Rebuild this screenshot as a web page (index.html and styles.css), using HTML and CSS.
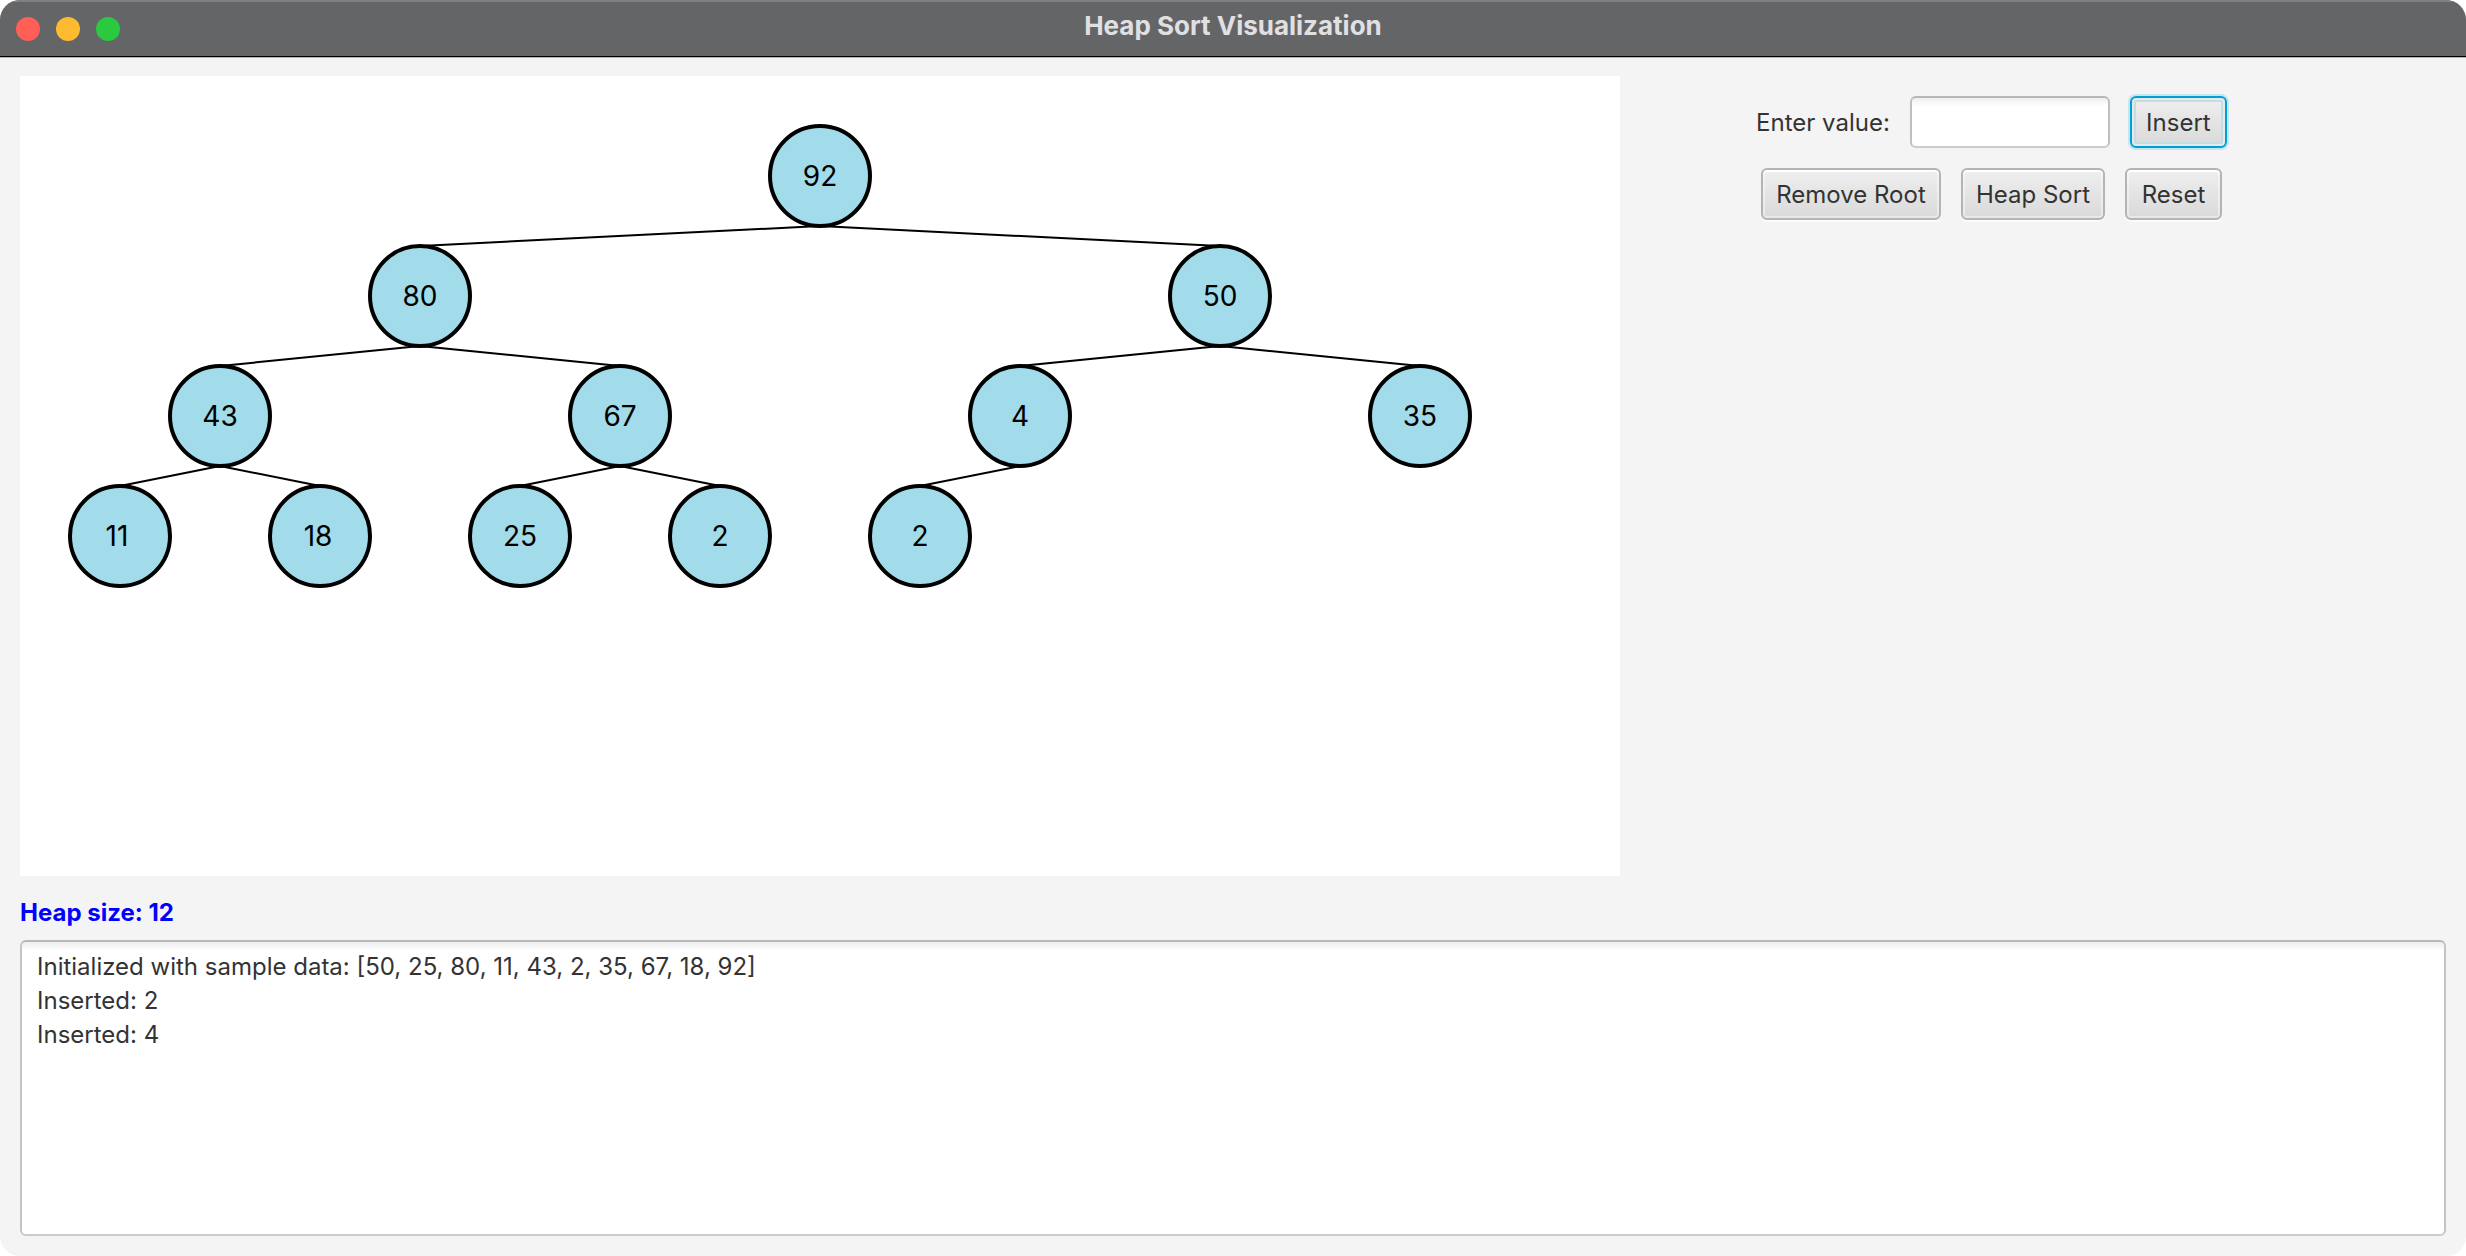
FILE: index.html
```html
<!DOCTYPE html>
<html lang="en">
<head>
<meta charset="utf-8">
<title>Heap Sort Visualization</title>
<link rel="stylesheet" href="styles.css">
</head>
<body>
<div class="window">
  <header class="titlebar">
    <div class="lights">
      <span class="light light-close"></span>
      <span class="light light-minimize"></span>
      <span class="light light-zoom"></span>
    </div>
    <h1 class="title">Heap Sort Visualization</h1>
  </header>
  <main class="content">
    <div class="workspace">
      <svg class="tree" viewBox="0 0 1600 800" role="img" aria-label="Heap tree">
        <g class="edges">
          <line x1="800" y1="150" x2="400" y2="170"/>
          <line x1="800" y1="150" x2="1200" y2="170"/>
          <line x1="400" y1="270" x2="200" y2="290"/>
          <line x1="400" y1="270" x2="600" y2="290"/>
          <line x1="1200" y1="270" x2="1000" y2="290"/>
          <line x1="1200" y1="270" x2="1400" y2="290"/>
          <line x1="200" y1="390" x2="100" y2="410"/>
          <line x1="200" y1="390" x2="300" y2="410"/>
          <line x1="600" y1="390" x2="500" y2="410"/>
          <line x1="600" y1="390" x2="700" y2="410"/>
          <line x1="1000" y1="390" x2="900" y2="410"/>
        </g>
        <g class="nodes">
          <circle cx="800" cy="100" r="50"/>
          <circle cx="400" cy="220" r="50"/>
          <circle cx="1200" cy="220" r="50"/>
          <circle cx="200" cy="340" r="50"/>
          <circle cx="600" cy="340" r="50"/>
          <circle cx="1000" cy="340" r="50"/>
          <circle cx="1400" cy="340" r="50"/>
          <circle cx="100" cy="460" r="50"/>
          <circle cx="300" cy="460" r="50"/>
          <circle cx="500" cy="460" r="50"/>
          <circle cx="700" cy="460" r="50"/>
          <circle cx="900" cy="460" r="50"/>
        </g>
        <g class="values">
          <text x="800" y="110">92</text>
          <text x="400" y="230">80</text>
          <text x="1200" y="230">50</text>
          <text x="200" y="350">43</text>
          <text x="600" y="350">67</text>
          <text x="1000" y="350">4</text>
          <text x="1400" y="350">35</text>
          <text x="97" y="470">11</text>
          <text x="298" y="470">18</text>
          <text x="500" y="470">25</text>
          <text x="700" y="470">2</text>
          <text x="900" y="470">2</text>
        </g>
      </svg>
      <form class="controls" onsubmit="return false">
        <label class="label" for="value">Enter value:</label>
        <input class="field" id="value" type="text">
        <button class="button button-focused" type="submit">Insert</button>
        <button class="button button-wide" type="button">Remove Root</button>
        <button class="button button-medium" type="button">Heap Sort</button>
        <button class="button" type="reset">Reset</button>
      </form>
    </div>
    <label class="status" for="log">Heap size: 12</label>
    <textarea class="log" id="log" readonly>Initialized with sample data: [50, 25, 80, 11, 43, 2, 35, 67, 18, 92]
Inserted: 2
Inserted: 4</textarea>
  </main>
</div>
</body>
</html>
```

FILE: styles.css
```css
* {
  box-sizing: border-box;
}

body {
  margin: 0;
  background: #ffffff;
  color: #333333;
  font-family: Inter, "Liberation Sans", sans-serif;
  font-size: 24px;
}

.window {
  display: flex;
  flex-direction: column;
  min-height: 100vh;
  border-radius: 20px;
  background: #f4f4f4;
  overflow: hidden;
}

.titlebar {
  display: grid;
  grid-template-columns: 1fr auto 1fr;
  align-items: center;
  height: 57px;
  padding: 0 16px;
  border-top: 2px solid #7f8183;
  border-bottom: 1px solid #000000;
  background: #646567;
  box-shadow: 0 1px 0 #b4b4b4;
}

.lights {
  display: flex;
  gap: 16px;
}

.light {
  width: 24px;
  height: 24px;
  border-radius: 50%;
}

.light-close {
  background: #ff5f57;
}

.light-minimize {
  background: #febb2f;
}

.light-zoom {
  background: #2ac940;
}

.title {
  margin: 0;
  padding-bottom: 6px;
  color: #e0e0e2;
  font-size: 26px;
  font-weight: 700;
  line-height: 32px;
}

.content {
  display: flex;
  flex: 1;
  flex-direction: column;
  padding: 19px 20px 20px;
}

.workspace {
  display: grid;
  grid-template-columns: minmax(0, 1600px) minmax(0, 703px);
  gap: 20px;
}

.tree {
  display: block;
  width: 100%;
  background: #ffffff;
}

.edges {
  stroke: #000000;
  stroke-width: 2;
}

.nodes {
  fill: #a2dbe9;
  stroke: #000000;
  stroke-width: 4;
}

.values {
  fill: #000000;
  font-size: 28px;
  text-anchor: middle;
}

.controls {
  display: flex;
  flex-wrap: wrap;
  align-content: flex-start;
  align-items: center;
  justify-content: center;
  gap: 20px;
  padding: 20px;
}

.field {
  width: 200px;
  height: 52px;
  padding: 0 14px;
  border: 2px solid #bfbfbf;
  border-top-color: #b7b7b7;
  border-bottom-color: #cbcbcb;
  border-radius: 6px;
  background: linear-gradient(#efefef, #ffffff 8px);
  color: inherit;
  font: inherit;
}

.button {
  min-width: 97px;
  height: 52px;
  padding: 0;
  border: 2px solid #b4b4b4;
  border-radius: 6px;
  background: linear-gradient(#efefef, #d9d9d9);
  box-shadow: inset 0 0 0 2px #ffffff66, inset 0 2px 0 #ffffff, 0 2px 0 #fbfbfb;
  color: inherit;
  font: inherit;
}

.button-medium {
  min-width: 144px;
}

.button-wide {
  min-width: 180px;
}

.button-focused {
  border-color: #039ed3;
  box-shadow: inset 0 0 0 2px #e2eaec, inset 0 0 0 4px #c4dde2, 0 0 0 2px #c5e6ee;
}

.status {
  margin-top: 20px;
  color: #0000ff;
  font-weight: 700;
  line-height: 34px;
}

.log {
  display: block;
  flex: 1;
  min-height: 160px;
  margin-top: 10px;
  padding: 8px 15px;
  border: 2px solid #c4c4c4;
  border-top-color: #b7b7b7;
  border-bottom-color: #cbcbcb;
  border-radius: 6px;
  outline: none;
  background: linear-gradient(#eeeeee, #ffffff 9px);
  color: inherit;
  font: inherit;
  line-height: 34px;
  resize: none;
}
```
